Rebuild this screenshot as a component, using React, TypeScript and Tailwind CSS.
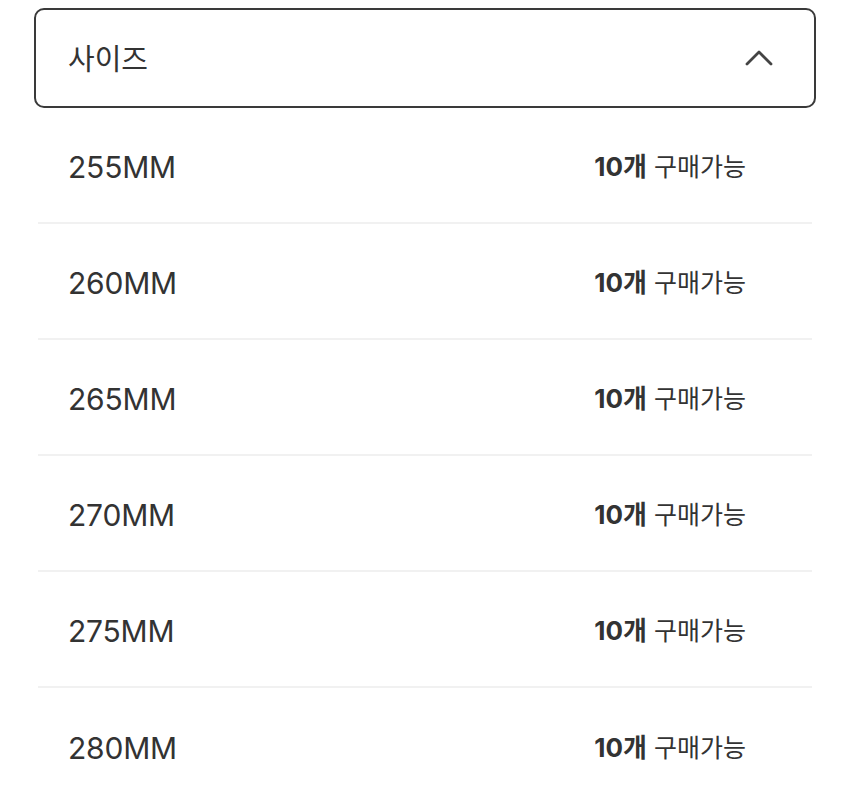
import React from "react";

const sizes = ["255MM", "260MM", "265MM", "270MM", "275MM", "280MM"];

export default function App() {
  return (
    <div
      className="w-[850px] h-[795px] bg-white overflow-hidden pt-[8px] pl-[34px] pr-[34px] text-[#333]"
      style={{ fontFamily: 'Inter, "Noto Sans CJK KR", sans-serif' }}
    >
      <div className="h-[100px] w-[782px] border-2 border-[#3a3a3a] rounded-[10px] flex items-center justify-between pl-[32px] pr-[40px]">
        <span className="text-[29px] leading-none text-[#333] pt-[2px]">사이즈</span>
        <svg width="30" height="18" viewBox="0 0 30 18" fill="none">
          <polyline
            points="3,15 15,3 27,15"
            stroke="#444"
            strokeWidth="2.8"
            strokeLinecap="round"
            strokeLinejoin="round"
          />
        </svg>
      </div>
      <div className="ml-[4px] mr-[4px]">
        {sizes.map((s, i) => (
          <div
            key={s}
            className={
              "h-[116px] flex items-center justify-between pl-[30px] pr-[66px] pt-[4px] " +
              (i < sizes.length - 1 ? "border-b-2 border-[#f1f1f1]" : "")
            }
          >
            <span className="text-[30px] leading-none text-[#333] tracking-[-0.2px]">{s}</span>
            <span className="text-[25px] leading-none text-[#333]">
              <span className="font-bold text-[26px]">10개</span> 구매가능
            </span>
          </div>
        ))}
      </div>
    </div>
  );
}
